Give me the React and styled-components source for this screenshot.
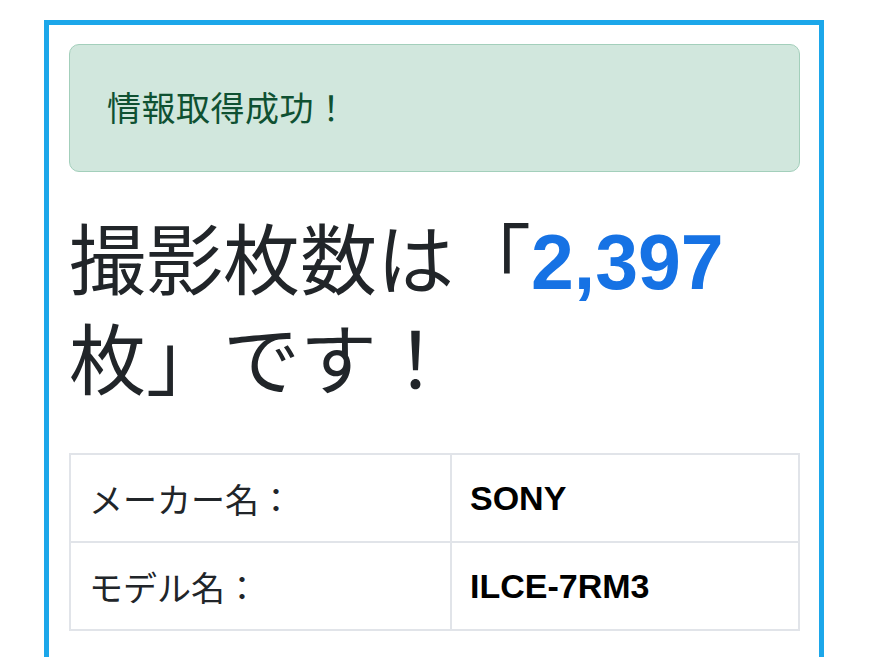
import styled, { createGlobalStyle } from "styled-components";

const GlobalStyle = createGlobalStyle`
    body{
        margin: 0;
        background: #fff;
        font-family: "Liberation Sans", "Noto Sans CJK JP", sans-serif;
        color: #212529;
        overflow: hidden;
    }
`;

function App() {
    return (
        <>
            <GlobalStyle />
            <Frame>
                <Alert>情報取得成功！</Alert>
                <Heading>
                    撮影枚数は「<Count>2,397</Count>枚」です！
                </Heading>
                <InfoTable>
                    <colgroup>
                        <col style={{ width: 381 }} />
                        <col />
                    </colgroup>
                    <tbody>
                        <tr>
                            <Cell>メーカー名：</Cell>
                            <Cell $bold>SONY</Cell>
                        </tr>
                        <tr>
                            <Cell>モデル名：</Cell>
                            <Cell $bold>ILCE-7RM3</Cell>
                        </tr>
                    </tbody>
                </InfoTable>
            </Frame>
        </>
    );
}

const Frame = styled.div`
    box-sizing: border-box;
    margin: 20px 0 0 44px;
    width: 780px;
    min-height: 700px;
    border: 5px solid #1ca7ea;
    border-bottom: none;
    padding: 19px 19px 0 20px;
`;

const Alert = styled.div`
    box-sizing: border-box;
    height: 128px;
    display: flex;
    align-items: center;
    padding: 0 37px 3px;
    background: #d1e7dd;
    border: 1px solid #a3cfbb;
    border-radius: 10px;
    color: #0f5132;
    font-family: "Noto Sans CJK JP", sans-serif;
    font-size: 34px;
    letter-spacing: 0.5px;
`;

const Heading = styled.h1`
    margin: 40px 0 41px 0;
    font-size: 77px;
    font-weight: 400;
    line-height: 100px;
    font-family: "Liberation Sans", "Noto Sans CJK JP", sans-serif;
`;

const Count = styled.span`
    color: #1672e4;
    font-weight: 700;
`;

const InfoTable = styled.table`
    width: 100%;
    border-collapse: collapse;
    table-layout: fixed;
`;

const Cell = styled.td`
    border: 2px solid #e1e4e9;
    height: 86px;
    padding: 0 18px;
    font-size: ${p => p.$bold ? "34px" : "34px"};
    font-weight: ${p => p.$bold ? 700 : 400};
    font-family: ${p => p.$bold ? '"Liberation Sans", sans-serif' : '"Noto Sans CJK JP", sans-serif'};
    color: ${p => p.$bold ? "#000" : "#212529"};
`;

export default App;
